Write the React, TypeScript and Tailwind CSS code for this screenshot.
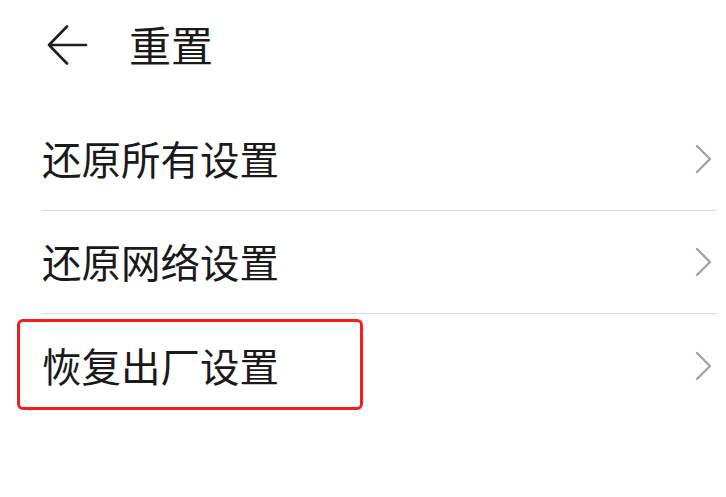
const items = ["还原所有设置", "还原网络设置", "恢复出厂设置"];

const Chevron = () => (
  <svg width="18" height="30" viewBox="0 0 18 30" fill="none" className="shrink-0">
    <path d="M2 2 L15 15 L2 28" stroke="#a3a3a3" strokeWidth="2.4" strokeLinecap="round" strokeLinejoin="round" />
  </svg>
);

export default function App() {
  return (
    <div
      className="w-[726px] h-[497px] bg-white overflow-hidden text-[#1a1a1a]"
      style={{ fontFamily: '"Noto Sans CJK SC", "Noto Sans", sans-serif' }}
    >
      {/* header */}
      <div className="h-[108px] flex items-start pt-[25px] pl-[47px]">
        <svg width="42" height="42" viewBox="0 0 42 42" fill="none" className="shrink-0">
          <path d="M2 20 H39 M20 1.5 L2 20 L20 38.5" stroke="#1f1f1f" strokeWidth="2.6" strokeLinecap="round" strokeLinejoin="round" />
        </svg>
        <h1 className="ml-[40px] -mt-[2px] text-[42px] leading-none font-normal">重置</h1>
      </div>

      {/* list */}
      <ul className="ml-[42px] mr-[9px]">
        {items.map((label, i) => (
          <li
            key={label}
            className={
              "relative h-[103px] flex items-center justify-between pr-[4px] " +
              (i < items.length - 1 ? "border-b border-[#dcdcdc]" : "")
            }
          >
            <span className="text-[39.5px] leading-none -mt-[2px]">{label}</span>
            <Chevron />
            {i === 2 && (
              <div className="absolute left-[-25px] top-[5px] w-[346px] h-[91px] border-[3px] border-[#f51d1d] rounded-[6px] pointer-events-none" />
            )}
          </li>
        ))}
      </ul>
    </div>
  );
}
